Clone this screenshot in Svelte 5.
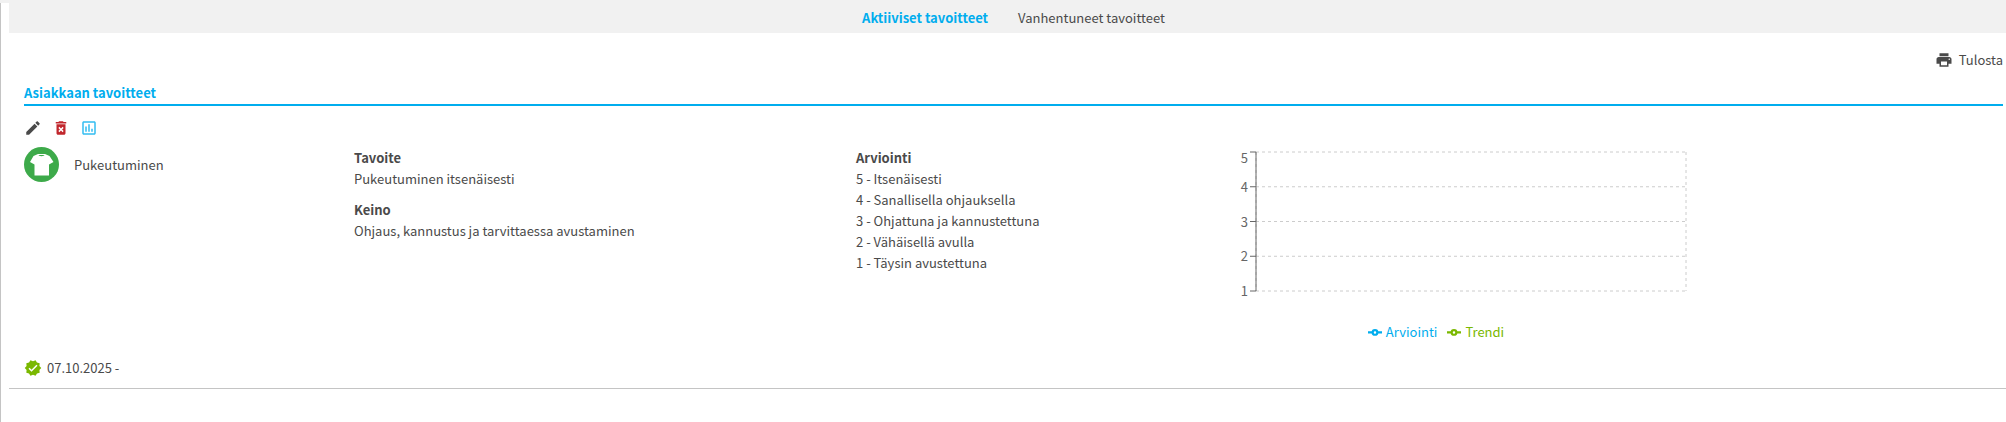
<script lang="ts">
    type Tab = "active" | "expired";

    const tabs: { id: Tab; label: string }[] = [
        { id: "active", label: "Aktiiviset tavoitteet" },
        { id: "expired", label: "Vanhentuneet tavoitteet" },
    ];

    const goal = {
        name: "Pukeutuminen",
        target: "Pukeutuminen itsenäisesti",
        means: "Ohjaus, kannustus ja tarvittaessa avustaminen",
        period: "07.10.2025 -",
        scale: [
            { value: 5, label: "Itsenäisesti" },
            { value: 4, label: "Sanallisella ohjauksella" },
            { value: 3, label: "Ohjattuna ja kannustettuna" },
            { value: 2, label: "Vähäisellä avulla" },
            { value: 1, label: "Täysin avustettuna" },
        ],
    };

    const series = [
        { label: "Arviointi", color: "#00adee" },
        { label: "Trendi", color: "#7ab800" },
    ];

    // Plot area inside the chart svg
    const plot = { left: 70, right: 500, top: 5, bottom: 144 };

    let activeTab = $state<Tab>("active");

    function tickY(value: number) {
        return plot.top + ((5 - value) / 4) * (plot.bottom - plot.top);
    }
</script>

<div class="page">
    <nav class="tabs">
        {#each tabs as tab}
            <button
                class="tab"
                class:active={activeTab === tab.id}
                onclick={() => (activeTab = tab.id)}
            >
                {tab.label}
            </button>
        {/each}
    </nav>

    <main>
        <div class="toolbar">
            <button class="print" onclick={() => window.print()}>
                <svg class="icon" viewBox="0 0 24 24" aria-hidden="true">
                    <path d="M19 8H5c-1.66 0-3 1.34-3 3v6h4v4h12v-4h4v-6c0-1.66-1.34-3-3-3zm-3 11H8v-5h8v5zm3-7c-.55 0-1-.45-1-1s.45-1 1-1 1 .45 1 1-.45 1-1 1zm-1-9H6v4h12V3z" />
                </svg>
                Tulosta
            </button>
        </div>

        <h2>Asiakkaan tavoitteet</h2>

        <div class="actions">
            <button aria-label="Muokkaa">
                <svg class="icon" viewBox="0 0 24 24">
                    <path d="M3 17.25V21h3.75L17.81 9.94l-3.75-3.75L3 17.25zM20.71 7.04c.39-.39.39-1.02 0-1.41l-2.34-2.34c-.39-.39-1.02-.39-1.41 0l-1.83 1.83 3.75 3.75 1.83-1.83z" />
                </svg>
            </button>
            <button class="delete" aria-label="Poista">
                <svg class="icon" viewBox="0 0 24 24">
                    <path d="M6 19c0 1.1.9 2 2 2h8c1.1 0 2-.9 2-2V7H6v12zm2.46-7.12l1.41-1.41L12 12.59l2.12-2.12 1.41 1.41L13.41 14l2.12 2.12-1.41 1.41L12 15.41l-2.12 2.12-1.41-1.41L10.59 14l-2.13-2.12zM15.5 4l-1-1h-5l-1 1H5v2h14V4z" />
                </svg>
            </button>
            <button class="assess" aria-label="Arvioi">
                <svg class="icon" viewBox="0 0 24 24">
                    <path d="M9 17H7v-7h2v7zm4 0h-2V7h2v10zm4 0h-2v-4h2v4zm2 2H5V5h14v14zm0-16H5c-1.1 0-2 .9-2 2v14c0 1.1.9 2 2 2h14c1.1 0 2-.9 2-2V5c0-1.1-.9-2-2-2z" />
                </svg>
            </button>
        </div>

        <section class="goal">
            <div class="category">
                <svg class="badge" viewBox="0 0 35 35" aria-hidden="true">
                    <circle cx="17.5" cy="17.5" r="17.5" fill="#3daa4a" />
                    <path fill="#fff" d="M14 7C14.5 10 20.500 10 21 7L25.500 9L29.500 15L25 17.500V28.500H10.500V17.500L6 15L9.500 9Z" />
                    <path fill="none" stroke="#fff" d="M14 7.5h7" />
                </svg>
                <span>{goal.name}</span>
            </div>

            <dl>
                <dt>Tavoite</dt>
                <dd>{goal.target}</dd>
                <dt>Keino</dt>
                <dd>{goal.means}</dd>
            </dl>

            <dl>
                <dt>Arviointi</dt>
                {#each goal.scale as level}
                    <dd>{level.value} - {level.label}</dd>
                {/each}
            </dl>

            <div class="chart">
                <svg width="502" height="170" role="img" aria-label="Arviointi">
                    <g class="grid">
                        {#each goal.scale as level}
                            <line x1={plot.left} x2={plot.right} y1={tickY(level.value)} y2={tickY(level.value)} />
                        {/each}
                        <line x1={plot.left} x2={plot.left} y1={plot.top} y2={plot.bottom} />
                        <line x1={plot.right} x2={plot.right} y1={plot.top} y2={plot.bottom} />
                    </g>
                    <g class="axis">
                        <line x1={plot.left} x2={plot.left} y1={plot.top} y2={plot.bottom} />
                        {#each goal.scale as level}
                            <line x1={plot.left - 6} x2={plot.left} y1={tickY(level.value)} y2={tickY(level.value)} />
                            <!-- the top label is kept inside the svg -->
                            <text x={plot.left - 8} y={Math.max(tickY(level.value), 11)} dy="5">{level.value}</text>
                        {/each}
                    </g>
                </svg>
                <ul class="legend">
                    {#each series as item}
                        <li style="color: {item.color}">
                            <svg width="14" height="14" viewBox="0 0 32 32" aria-hidden="true">
                                <path
                                    fill="none"
                                    stroke="currentColor"
                                    stroke-width="5"
                                    d="M0,17h10.667A5.333,5.333,0,1,1,21.333,17H32M21.333,17A5.333,5.333,0,1,1,10.667,17"
                                />
                            </svg>
                            {item.label}
                        </li>
                    {/each}
                </ul>
            </div>
        </section>

        <div class="period">
            <svg class="icon" viewBox="0 0 24 24" aria-hidden="true">
                <path d="M23 12l-2.44-2.78.34-3.68-3.61-.82-1.89-3.18L12 3 8.6 1.54 6.71 4.72l-3.61.81.34 3.68L1 12l2.44 2.78-.34 3.69 3.61.82 1.89 3.18L12 21l3.4 1.46 1.89-3.18 3.61-.82-.34-3.68L23 12zm-13 5l-4-4 1.41-1.41L10 14.17l6.59-6.59L18 9l-8 8z" />
            </svg>
            {goal.period}
        </div>
    </main>
</div>

<style>
    :global(body) {
        margin: 0;
        background: #fff;
    }

    .page {
        box-sizing: border-box;
        min-height: 100vh;
        border-top: 3px solid #f1f1f1;
        padding-left: 8px;
        box-shadow: inset 1px 0 #c4c4c4;
        color: #4a4a4a;
        font-family: "Noto Sans CJK SC", "Noto Sans", sans-serif;
        font-size: 13px;
        line-height: 21px;
    }

    button {
        display: flex;
        align-items: center;
        border: none;
        padding: 0;
        background: none;
        color: inherit;
        font: inherit;
        cursor: pointer;
    }

    .icon {
        display: block;
        width: 18px;
        height: 18px;
        fill: currentColor;
    }

    .tabs {
        display: flex;
        justify-content: center;
        gap: 30px;
        margin-left: 1px;
        padding: 4px 3px 5px 15px;
        background: #f1f1f1;
    }

    .tab.active {
        color: #00adee;
        font-weight: bold;
    }

    main {
        margin-left: 1px;
        padding: 16px 3px 10px 15px;
        border-bottom: 1px solid #c4c4c4;
    }

    .toolbar {
        display: flex;
        justify-content: flex-end;
    }

    .print {
        gap: 6px;
    }

    h2 {
        margin: 12px 0 13px;
        padding-bottom: 1px;
        border-bottom: 2px solid #00adee;
        color: #00adee;
        font-size: 13px;
        font-weight: bold;
    }

    .actions {
        display: flex;
        gap: 10px;
    }

    .delete {
        color: #c1272d;
    }

    .assess {
        color: #33bdf1;
    }

    .goal {
        display: grid;
        grid-template-columns: 330fr 502fr 330fr 817fr;
        margin-top: 10px;
    }

    .category {
        display: flex;
        align-items: center;
        align-self: start;
        gap: 15px;
    }

    .badge {
        width: 35px;
        height: 35px;
    }

    dl {
        margin: 0;
    }

    dt {
        font-weight: bold;
    }

    dd {
        margin: 0;
    }

    dd + dt {
        margin-top: 10px;
    }

    .chart > svg {
        display: block;
    }

    .grid line {
        stroke: #ccc;
        stroke-dasharray: 3 3;
    }

    .axis line {
        stroke: #666;
    }

    .axis text {
        fill: #666;
        text-anchor: end;
    }

    .legend {
        display: flex;
        justify-content: center;
        gap: 10px;
        width: 500px;
        margin: 4px 0 0;
        padding: 0;
        list-style: none;
    }

    .legend li {
        display: flex;
        align-items: center;
        gap: 4px;
    }

    .period {
        display: flex;
        align-items: center;
        gap: 5px;
        margin-top: 15px;
    }

    .period .icon {
        fill: #7ab800;
    }
</style>
